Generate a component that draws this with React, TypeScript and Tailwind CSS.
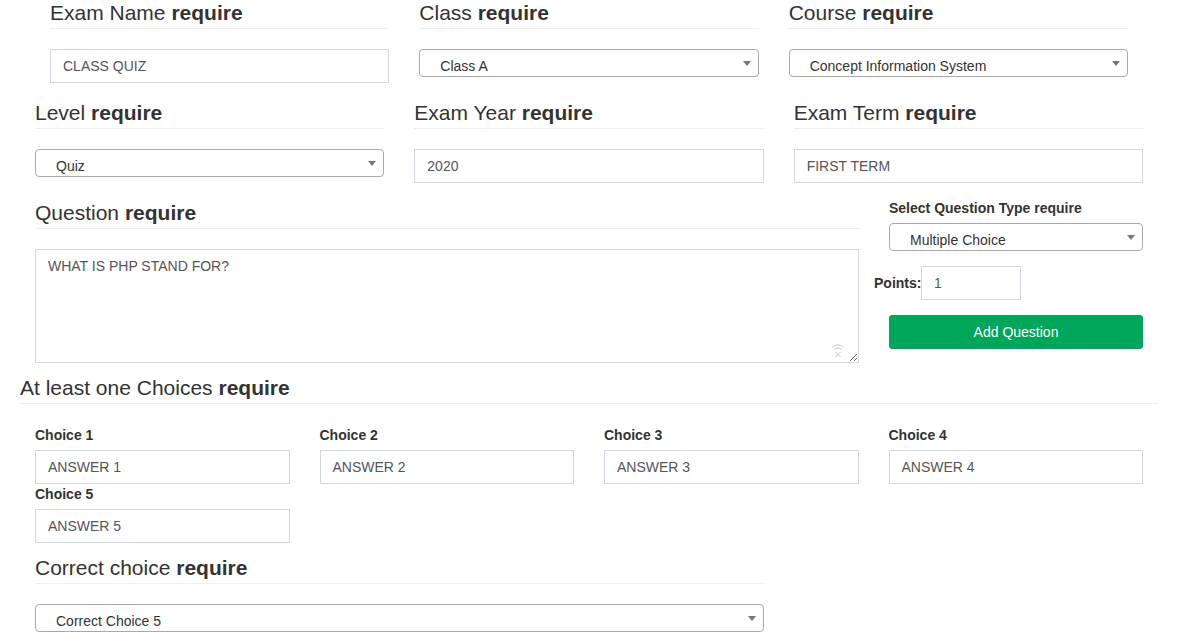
function Heading({ label, className = '' }: { label: string; className?: string }) {
  return (
    <h3 className={`text-[21px] leading-[22px] pb-[4px] border-b border-[#eee] text-[#333] ${className}`}>
      {label} <b className="font-bold">require</b>
    </h3>
  )
}

function TextInput({ value, className = '' }: { value: string; className?: string }) {
  return (
    <div className={`h-[34px] border border-[#d2d6de] pl-[12px] flex items-center text-[14px] text-[#555] ${className}`}>
      {value}
    </div>
  )
}

function Select({ value, className = '' }: { value: string; className?: string }) {
  return (
    <div className={`relative h-[28px] border border-[#a9a9a9] rounded-[4px] pl-[20px] pt-[6px] text-[14px] leading-[20px] text-[#333] ${className}`}>
      {value}
      <svg className="absolute right-[7px] top-[11px]" width="8" height="5" viewBox="0 0 8 5">
        <path d="M0 0 L8 0 L4 5 Z" fill="#777" />
      </svg>
    </div>
  )
}

function Field({ title, children }: { title: string; children: React.ReactNode }) {
  return (
    <div>
      <Heading label={title} />
      <div className="mt-[20px]">{children}</div>
    </div>
  )
}

function Choice({ n }: { n: number }) {
  return (
    <div>
      <div className="text-[14px] leading-[20px] font-bold text-[#333] mb-[5px]">Choice {n}</div>
      <TextInput value={`ANSWER ${n}`} />
    </div>
  )
}

export default function App() {
  return (
    <div className="w-[1187px] h-[637px] overflow-hidden bg-white font-['Liberation_Sans',Arial,sans-serif] text-[#333]">
      {/* first row */}
      <div className="grid grid-cols-3 gap-x-[30px] items-start pl-[50px] pr-[59px] pt-[2px]">
        <Field title="Exam Name">
          <TextInput value="CLASS QUIZ" />
        </Field>
        <Field title="Class">
          <Select value="Class A" />
        </Field>
        <Field title="Course">
          <Select value="Concept Information System" />
        </Field>
      </div>

      {/* second row */}
      <div className="grid grid-cols-3 gap-x-[30px] items-start pl-[35px] pr-[44px] mt-[19px]">
        <Field title="Level">
          <Select value="Quiz" />
        </Field>
        <Field title="Exam Year">
          <TextInput value="2020" />
        </Field>
        <Field title="Exam Term">
          <TextInput value="FIRST TERM" />
        </Field>
      </div>

      {/* question row */}
      <div className="grid grid-cols-[824px_254px] gap-x-[30px] items-start pl-[35px] mt-[19px]">
        <div>
          <Heading label="Question" />
          <div className="relative mt-[20px]">
            <textarea
              className="block w-full h-[114px] border border-[#d2d6de] px-[12px] py-[6px] text-[14px] leading-[20px] text-[#555] outline-none"
              defaultValue="WHAT IS PHP STAND FOR?"
            />
            <svg className="absolute right-[14px] bottom-[5px]" width="14" height="16" viewBox="0 0 14 16" fill="none" stroke="#c8c8c8" strokeWidth="1">
              <path d="M1.5 5 A8 8 0 0 1 12.5 5" />
              <path d="M3.5 7.5 A5 5 0 0 1 10.5 7.5" />
              <path d="M4.5 10 L9.5 15 M9.5 10 L4.5 15" />
            </svg>
          </div>
        </div>
        <div className="-mt-[4px]">
          <div className="text-[14px] leading-[20px] font-bold text-[#333] mb-[5px]">Select Question Type require</div>
          <Select value="Multiple Choice" />
          <div className="flex items-center -ml-[15px] mt-[15px]">
            <span className="text-[14px] font-bold text-[#333] w-[47px]">Points:</span>
            <TextInput value="1" className="w-[100px]" />
          </div>
          <button className="mt-[15px] w-full h-[34px] rounded-[3px] bg-[#00a65a] text-white text-[14px]">
            Add Question
          </button>
        </div>
      </div>

      {/* choices */}
      <div className="pl-[20px] pr-[29px] mt-[14px]">
        <Heading label="At least one Choices" />
      </div>
      <div className="grid grid-cols-4 gap-x-[30px] pl-[35px] pr-[44px] mt-[21px]">
        {[1, 2, 3, 4, 5].map((n) => (
          <Choice key={n} n={n} />
        ))}
      </div>

      {/* correct choice */}
      <div className="pl-[35px] w-[764px] mt-[14px]">
        <Field title="Correct choice">
          <Select value="Correct Choice 5" />
        </Field>
      </div>
    </div>
  )
}
